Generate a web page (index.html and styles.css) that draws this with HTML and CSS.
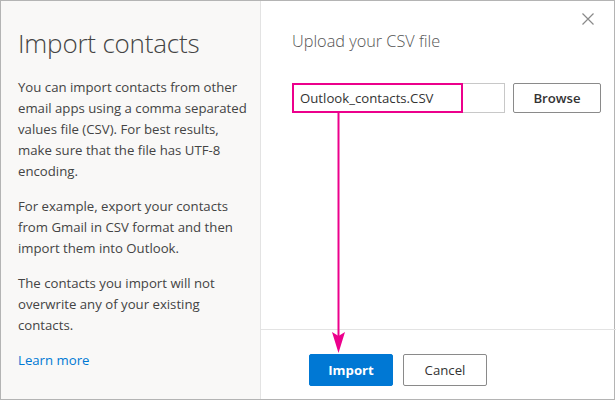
FILE: index.html
```html
<!DOCTYPE html>
<html>
<head>
<meta charset="utf-8">
<link rel="stylesheet" href="styles.css">
</head>
<body>
<div class="dialog">
  <aside class="side">
    <h1 class="title">Import contacts</h1>
    <p class="para">You can import contacts from other email apps using a comma separated values file (CSV). For best results, make sure that the file has UTF-8 encoding.</p>
    <p class="para">For example, export your contacts from Gmail in CSV format and then import them into Outlook.</p>
    <p class="para">The contacts you import will not overwrite any of your existing contacts.</p>
    <a class="link" href="#">Learn more</a>
  </aside>
  <section class="main">
    <div class="body">
      <div class="close-row">
        <svg class="close" width="12" height="12" viewBox="0 0 12 12"><path d="M0.5 0.5 L11.5 11.5 M11.5 0.5 L0.5 11.5" stroke="#8a8a8a" stroke-width="1.2" fill="none"/></svg>
      </div>
      <h2 class="subtitle">Upload your CSV file</h2>
      <div class="file-row">
        <div class="file-input">
          <span class="file-name">Outlook_contacts.CSV</span>
          <span class="highlight"></span>
        </div>
        <button class="btn">Browse</button>
      </div>
    </div>
    <footer class="footer">
      <button class="btn btn-primary">Import</button>
      <button class="btn">Cancel</button>
    </footer>
  </section>
  <svg class="arrow" width="616" height="401" viewBox="0 0 616 401">
    <line x1="338.5" y1="113" x2="338.5" y2="340" stroke="#ec008c" stroke-width="2"/>
    <path d="M332 332 L338.5 336 L345 332 L338.5 353 Z" fill="#ec008c"/>
  </svg>
</div>
</body>
</html>
```
FILE: styles.css
```css
html, body {
  margin: 0;
  padding: 0;
  background: #ffffff;
}
.dialog {
  position: relative;
  box-sizing: border-box;
  width: 615px;
  height: 400px;
  border: 1px solid #b4b4b4;
  display: flex;
  font-family: "Open Sans", "Noto Sans", sans-serif;
  background: #ffffff;
}
.side {
  box-sizing: border-box;
  width: 260px;
  flex: none;
  background: #f9f8f7;
  border-right: 1px solid #e3e3e3;
  padding: 24px 10px 0 17px;
}
.title {
  margin: 0;
  font-weight: 300;
  font-size: 26px;
  line-height: 36px;
  color: #444444;
  letter-spacing: -0.2px;
}
.para {
  margin: 14px 0 0 0;
  font-size: 13.2px;
  line-height: 21px;
  color: #444444;
}
.side .title + .para {
  margin-top: 16px;
}
.link {
  display: block;
  margin-top: 14px;
  font-size: 13.2px;
  line-height: 21px;
  color: #0078d4;
  text-decoration: none;
}
.main {
  flex: 1;
  display: flex;
  flex-direction: column;
}
.body {
  flex: 1;
  padding: 12px 16px 0 31px;
}
.close-row {
  display: flex;
  justify-content: flex-end;
  height: 14px;
}
.close {
  display: block;
  margin-right: 7px;
}
.subtitle {
  margin: 2px 0 0 0;
  font-weight: 300;
  font-size: 16.3px;
  line-height: 24px;
  color: #555555;
}
.file-row {
  display: flex;
  margin-top: 30px;
  gap: 8px;
}
.file-input {
  position: relative;
  box-sizing: border-box;
  width: 213px;
  height: 30px;
  border: 1px solid #c8c8c8;
  display: flex;
  align-items: center;
  padding-left: 7px;
}
.file-name {
  font-size: 13.2px;
  color: #333333;
}
.highlight {
  position: absolute;
  left: -1px;
  top: -1px;
  width: 171px;
  height: 30px;
  box-sizing: border-box;
  border: 2px solid #ec008c;
}
.btn {
  box-sizing: border-box;
  width: 88px;
  height: 30px;
  border: 1px solid #8a8a8a;
  background: #ffffff;
  border-radius: 2px;
  font-family: "Open Sans", "Noto Sans", sans-serif;
  font-size: 13.2px;
  font-weight: 600;
  color: #333333;
  padding: 0;
}
.footer {
  height: 70px;
  box-sizing: border-box;
  border-top: 1px solid #e3e3e3;
  padding: 24px 0 0 48px;
  display: flex;
  gap: 10px;
}
.footer .btn {
  width: 84px;
  height: 32px;
}
.btn-primary {
  background: #0078d4;
  border-color: #0078d4;
  color: #ffffff;
  font-weight: 700;
}
.footer .btn:not(.btn-primary) {
  font-weight: 400;
}
.arrow {
  position: absolute;
  left: -1px;
  top: -1px;
  pointer-events: none;
}
```
